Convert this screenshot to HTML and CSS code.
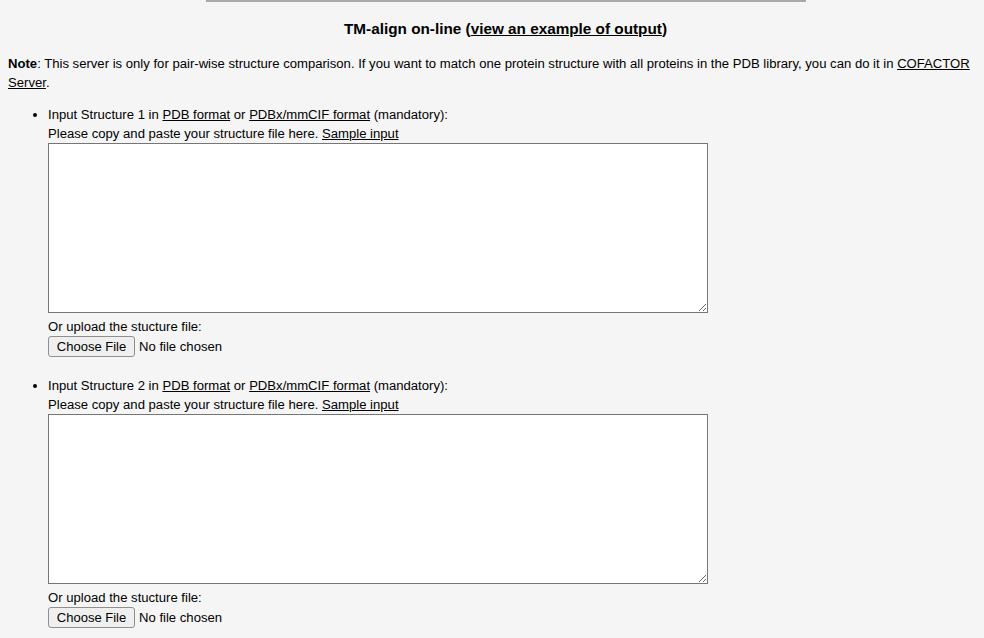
FILE: index.html
```html
<!DOCTYPE html>
<html>
<head>
<meta charset="utf-8">
<link rel="stylesheet" href="styles.css">
</head>
<body>
<div class="topline"></div>
<h3 class="title">TM-align on-line (<a href="#">view an example of output</a>)</h3>
<p class="note"><b>Note</b>: This server is only for pair-wise structure comparison. If you want to match one protein structure with all proteins in the PDB library, you can do it in <a href="#">COFACTOR Server</a>.</p>
<ul class="inputs">
  <li class="item">
    <div>Input Structure 1 in <a href="#">PDB format</a> or <a href="#">PDBx/mmCIF format</a> (mandatory):</div>
    <div>Please copy and paste your structure file here. <a href="#">Sample input</a></div>
    <textarea class="struct"></textarea>
    <div class="upload-label">Or upload the stucture file:</div>
    <div class="file"><button class="choose" type="button">Choose File</button><span class="nofile">No file chosen</span></div>
  </li>
  <li class="item">
    <div>Input Structure 2 in <a href="#">PDB format</a> or <a href="#">PDBx/mmCIF format</a> (mandatory):</div>
    <div>Please copy and paste your structure file here. <a href="#">Sample input</a></div>
    <textarea class="struct"></textarea>
    <div class="upload-label">Or upload the stucture file:</div>
    <div class="file"><button class="choose" type="button">Choose File</button><span class="nofile">No file chosen</span></div>
  </li>
</ul>
</body>
</html>
```
FILE: styles.css
```css
html, body {
  background: #f5f5f5;
}
body {
  margin: 0 8px;
  font-family: "Liberation Sans", Arial, sans-serif;
  font-size: 13.12px;
  line-height: 19px;
  color: #000;
}
a {
  color: #000;
  text-decoration: underline;
}
.topline {
  width: 600px;
  height: 2px;
  background: #a9a9a9;
  margin-left: 198px;
}
.title {
  margin: 17px 0 0;
  padding-left: 27px;
  text-align: center;
  font-size: 15.3px;
  line-height: 20px;
  font-weight: bold;
}
.note {
  margin: 15px 0 0;
}
.inputs {
  margin: 13px 0 0;
  padding-left: 40px;
}
.item {
  margin-bottom: 19px;
}
.struct {
  display: block;
  box-sizing: border-box;
  width: 660px;
  height: 170px;
  margin: 0 0 4px;
  border: 1px solid #767676;
  background: #fff;
  padding: 2px;
}
.file {
  display: flex;
  align-items: center;
  height: 21px;
}
.choose {
  box-sizing: border-box;
  height: 21px;
  width: 87px;
  padding: 0;
  border: 1px solid #8f8f8f;
  border-radius: 3px;
  background: #efefef;
  font-family: "Liberation Sans", Arial, sans-serif;
  font-size: 13px;
  color: #000;
}
.nofile {
  margin-left: 4px;
}
```
